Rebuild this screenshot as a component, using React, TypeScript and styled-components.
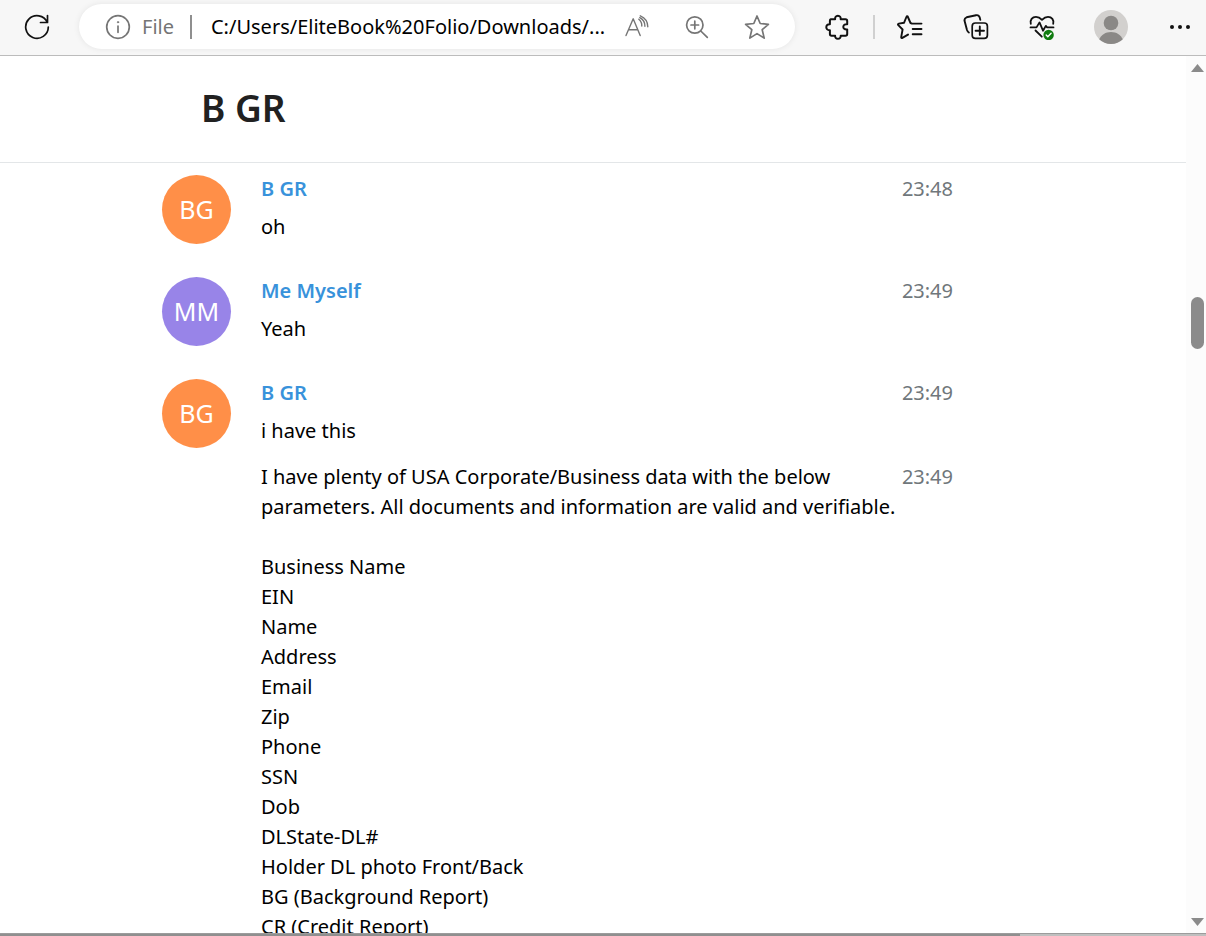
import React from "react";
import styled, { createGlobalStyle } from "styled-components";

const GlobalStyle = createGlobalStyle`
  *, *::before, *::after { box-sizing: border-box; }
  body {
    margin: 0;
    background: #fff;
    color: #000;
    font-family: "Noto Sans", "Open Sans", sans-serif;
    font-size: 20px;
    line-height: 30px;
  }
`;

const Window = styled.div`
  display: flex;
  flex-direction: column;
  height: 100vh;
  overflow: hidden;
`;

const Toolbar = styled.header`
  display: flex;
  align-items: center;
  flex: none;
  height: 56px;
  padding: 0 13px 2px 24px;
  background: #f7f7f7;
  border-bottom: 1px solid #bcbcbc;
`;

const IconButton = styled.button<{ $muted?: boolean }>`
  display: flex;
  align-items: center;
  justify-content: center;
  flex: none;
  width: 26px;
  height: 26px;
  padding: 0;
  border: 0;
  background: none;
  color: ${(p) => (p.$muted ? "#757575" : "#111")};

  svg { flex: none; }
`;

const AddressBar = styled.div`
  display: flex;
  align-items: center;
  flex: 1;
  min-width: 0;
  height: 45px;
  margin-left: 29px;
  padding: 0 25px 0 26px;
  border-radius: 23px;
  background: #fff;
  box-shadow: 0 0 6px rgba(0, 0, 0, 0.08);
`;

const Scheme = styled.label`
  margin: 0 16px 0 11px;
  color: #757575;
`;

const Divider = styled.span<{ $color: string }>`
  flex: none;
  width: 2px;
  height: 24px;
  background: ${(p) => p.$color};
`;

const AddressInput = styled.input`
  flex: 1;
  min-width: 0;
  height: 30px;
  margin: 0 16px 0 19px;
  padding: 0;
  border: 0;
  outline: 0;
  background: none;
  color: #000;
  font: inherit;
`;

const PageActions = styled.div`
  display: flex;
  gap: 34px;
`;

const BrowserActions = styled.nav`
  display: flex;
  align-items: center;
  gap: 40px;
  margin-left: 30px;
`;

const ExtensionGroup = styled.div`
  display: flex;
  align-items: center;
  gap: 22px;
`;

const ProfileButton = styled(IconButton)`
  width: 32px;
  height: 34px;
`;

const Viewport = styled.div`
  display: flex;
  flex: 1;
  min-height: 0;
`;

const Page = styled.main`
  flex: 1;
  min-width: 0;
  overflow: hidden;
`;

const ChatHeader = styled.div`
  padding: 27px 201px 29px;
  border-bottom: 1px solid #e3e6e8;
`;

const ChatTitle = styled.h1`
  margin: 0;
  color: #212121;
  font-size: 37px;
  font-weight: 600;
  line-height: 50px;
`;

const History = styled.div`
  display: flex;
  flex-direction: column;
  gap: 33px;
  max-width: 953px;
  padding: 12px 0 0 162px;
`;

const MessageRow = styled.article`
  display: flex;
  gap: 30px;
`;

const Userpic = styled.div<{ $color: string }>`
  flex: none;
  width: 69px;
  height: 69px;
  border-radius: 50%;
  background: ${(p) => p.$color};
  color: #fff;
  font-size: 25px;
  line-height: 68px;
  text-align: center;
`;

const Body = styled.div`
  flex: 1;
  min-width: 0;
`;

const Sender = styled.div`
  margin-bottom: 9px;
  color: #3892db;
  font-weight: 600;
  line-height: 28px;
`;

const Time = styled.time`
  float: right;
  padding-left: 16px;
  color: #70777b;
  font-weight: 400;
`;

const Text = styled.div`
  white-space: pre-line;
`;

const Followup = styled.div`
  margin-top: 16px;
`;

const Scrollbar = styled.div`
  display: flex;
  flex-direction: column;
  align-items: center;
  flex: none;
  width: 20px;
  padding: 8px 0 7px 3px;
  background: #fcfcfc;
`;

const Thumb = styled.div`
  width: 13px;
  height: 52px;
  margin: 224px 0 auto;
  border-radius: 7px;
  background: #8b8b8b;
`;

const BottomScroll = styled.div`
  flex: none;
  height: 3px;
  background: #bfbfbf;
  border-top: 1px solid #9c9c9c;
`;

const BottomThumb = styled.div`
  width: 1020px;
  max-width: 85%;
  height: 2px;
  background: #8f8f8f;
`;

const Svg = ({ children, size = 26 }: { children: React.ReactNode; size?: number }) => (
  <svg width={size} height={size} viewBox={`0 0 ${size} ${size}`} fill="none" stroke="currentColor"
    strokeWidth="1.7" strokeLinecap="round" strokeLinejoin="round" aria-hidden="true">
    {children}
  </svg>
);

const RefreshIcon = () => (
  <Svg><path d="M23.3 8.3A11.3 11.3 0 1 0 24.3 13M23.5 1.6v6.9h-7" strokeWidth="1.7" /></Svg>
);
const InfoIcon = () => (
  <Svg><circle cx="13" cy="13" r="11.3" /><path d="M13 12v6.300" /><circle cx="13" cy="8.2" r=".7" fill="currentColor" strokeWidth=".8" /></Svg>
);
const ReadAloudIcon = () => (
  <Svg><path d="M2 21.500 9.200 4.800 16.200 21.500M4.600 15.800h9.100M14.800 5.200c2 1.500 3.100 3.700 3 6.800M16.300 1.800c4.700 2 7.500 5.600 7.500 11M15.800 3.600c3.400 1.700 5.100 4.600 5.100 8.600" strokeWidth="1.4" /></Svg>
);
const ZoomIcon = () => (
  <Svg><circle cx="10.8" cy="11" r="8.2" /><path d="M16.8 17 23.300 23.300M10.800 7.200v7.600M7 11h7.600" /></Svg>
);
const StarIcon = () => (
  <Svg><path d="m13 2 3.200 7.500 8.200.8-6.200 5.400 2 8.400L13 19.600l-7.200 4.500 2-8.400-6.200-5.400 8.200-.8z" /></Svg>
);
const PuzzleIcon = () => (
  <Svg><path d="M5.800 5.300h4.300c-.2-1.900.7-3.600 2.800-3.600s3 1.700 2.800 3.600h4.800c1 0 1.700.7 1.700 1.700v3.200c-4.800-.8-5.600 5.800 0 5.200V20c0 1-.7 1.700-1.700 1.700h-4.800c.2 1.700-.8 3-2.800 3s-3-1.300-2.800-3H6.600c-1 0-1.700-.7-1.700-1.700v-3.800c-4.800.4-4.800-6.300 0-6V6.800c0-.8.2-1.300.9-1.500z" strokeWidth="2" /></Svg>
);
const FavoritesIcon = () => (
  <Svg><path d="M15 9.600 13.500 9 10.900 3c-.3-1-1.100-1-1.500 0L7.100 8.700l-5.300.9c-.9.200-1.100.9-.5 1.500l4.300 4.400-1.400 7.700c0 .8.500 1.100 1.200.7l5.600-3.300M15 9.600h9.500M15.700 15h8.800M15.700 20.200h8.800" strokeWidth="1.900" /></Svg>
);
const CollectionsIcon = () => (
  <Svg><rect x="9.200" y="9" width="15.200" height="15.400" rx="3.200" /><path d="M16.800 12.500v8.400M12.600 16.700H21M5.800 18.500C4.900 18 4.400 17.200 4 16L1.600 7.100c-.4-1.800.3-3.200 2-3.800L13 1.200c2-.4 3.100.4 3.700 2.200l.6 2.500" strokeWidth="1.900" /></Svg>
);
const EssentialsIcon = () => (
  <Svg>
    <path d="M1.800 9.800C.8 6 3.200 2.800 7 2.800c2.400 0 4.100 1 6 3 1.900-2 3.600-3 6-3 3.800 0 6.200 3.200 5.200 7M1.500 13.400h6l3-5 3.500 8.300 2.800-4.800 1.300 1.500h6.400M6.500 16.500l6.300 6.200" strokeWidth="1.800" />
    <circle cx="19.600" cy="21" r="5.200" fill="#107c10" stroke="none" />
    <path d="m17.200 21.100 1.600 1.600 3.300-3.500" stroke="#fff" strokeWidth="1.400" />
  </Svg>
);
const ProfileIcon = () => (
  <Svg size={34}>
    <circle cx="17" cy="17" r="17" fill="#d2d0ce" stroke="none" />
    <circle cx="17" cy="13" r="7.300" fill="#8a8886" stroke="none" />
    <path d="M5.200 29.200C7.400 24.800 11.500 22 17 22s9.600 2.800 11.800 7.200A17 17 0 0 1 5.200 29.200z" fill="#8a8886" stroke="none" />
  </Svg>
);
const MoreIcon = () => (
  <Svg><g fill="currentColor" stroke="none"><circle cx="5" cy="13" r="2" /><circle cx="13" cy="13" r="2" /><circle cx="21" cy="13" r="2" /></g></Svg>
);
const Arrow = ({ down }: { down?: boolean }) => (
  <svg width="13" height="9" viewBox="0 0 13 9" fill="#8b8b8b" aria-hidden="true">
    <path d={down ? "M0 1h13L6.5 9z" : "M0 8h13L6.5 0z"} />
  </svg>
);

type Message = {
  initials: string;
  name: string;
  color: string;
  time: string;
  text: string;
  more?: { time: string; text: string };
};

const ORANGE = "#ff8f48";
const PURPLE = "#9884e8";

const fields = [
  "Business Name", "EIN", "Name", "Address", "Email", "Zip", "Phone", "SSN", "Dob",
  "DLState-DL#", "Holder DL photo Front/Back", "BG (Background Report)", "CR (Credit Report)",
];

const messages: Message[] = [
  { initials: "BG", name: "B GR", color: ORANGE, time: "23:48", text: "oh" },
  { initials: "MM", name: "Me Myself", color: PURPLE, time: "23:49", text: "Yeah" },
  {
    initials: "BG", name: "B GR", color: ORANGE, time: "23:49", text: "i have this",
    more: {
      time: "23:49",
      text:
        "I have plenty of USA Corporate/Business data with the below\nparameters. All documents and information are valid and verifiable.\n\n" +
        fields.join("\n"),
    },
  },
];

export default function App() {
  return (
    <Window>
      <GlobalStyle />
      <Toolbar>
        <IconButton aria-label="Refresh"><RefreshIcon /></IconButton>
        <AddressBar>
          <IconButton $muted aria-label="Site information"><InfoIcon /></IconButton>
          <Scheme htmlFor="address">File</Scheme>
          <Divider $color="#8f8f8f" />
          <AddressInput id="address" defaultValue="C:/Users/EliteBook%20Folio/Downloads/..." />
          <PageActions>
            <IconButton $muted aria-label="Read aloud"><ReadAloudIcon /></IconButton>
            <IconButton $muted aria-label="Zoom"><ZoomIcon /></IconButton>
            <IconButton $muted aria-label="Add to favorites"><StarIcon /></IconButton>
          </PageActions>
        </AddressBar>
        <BrowserActions>
          <ExtensionGroup>
            <IconButton aria-label="Extensions"><PuzzleIcon /></IconButton>
            <Divider $color="#d0d0d0" />
            <IconButton aria-label="Favorites"><FavoritesIcon /></IconButton>
          </ExtensionGroup>
          <IconButton aria-label="Collections"><CollectionsIcon /></IconButton>
          <IconButton aria-label="Browser essentials"><EssentialsIcon /></IconButton>
          <ProfileButton aria-label="Profile"><ProfileIcon /></ProfileButton>
          <IconButton aria-label="Settings and more"><MoreIcon /></IconButton>
        </BrowserActions>
      </Toolbar>
      <Viewport>
        <Page>
          <ChatHeader><ChatTitle>B GR</ChatTitle></ChatHeader>
          <History>
            {messages.map((m, i) => (
              <MessageRow key={i}>
                <Userpic $color={m.color}>{m.initials}</Userpic>
                <Body>
                  <Sender><Time>{m.time}</Time>{m.name}</Sender>
                  <Text>{m.text}</Text>
                  {m.more && (
                    <Followup>
                      <Time>{m.more.time}</Time>
                      <Text>{m.more.text}</Text>
                    </Followup>
                  )}
                </Body>
              </MessageRow>
            ))}
          </History>
        </Page>
        <Scrollbar aria-hidden="true">
          <Arrow />
          <Thumb />
          <Arrow down />
        </Scrollbar>
      </Viewport>
      <BottomScroll aria-hidden="true"><BottomThumb /></BottomScroll>
    </Window>
  );
}
